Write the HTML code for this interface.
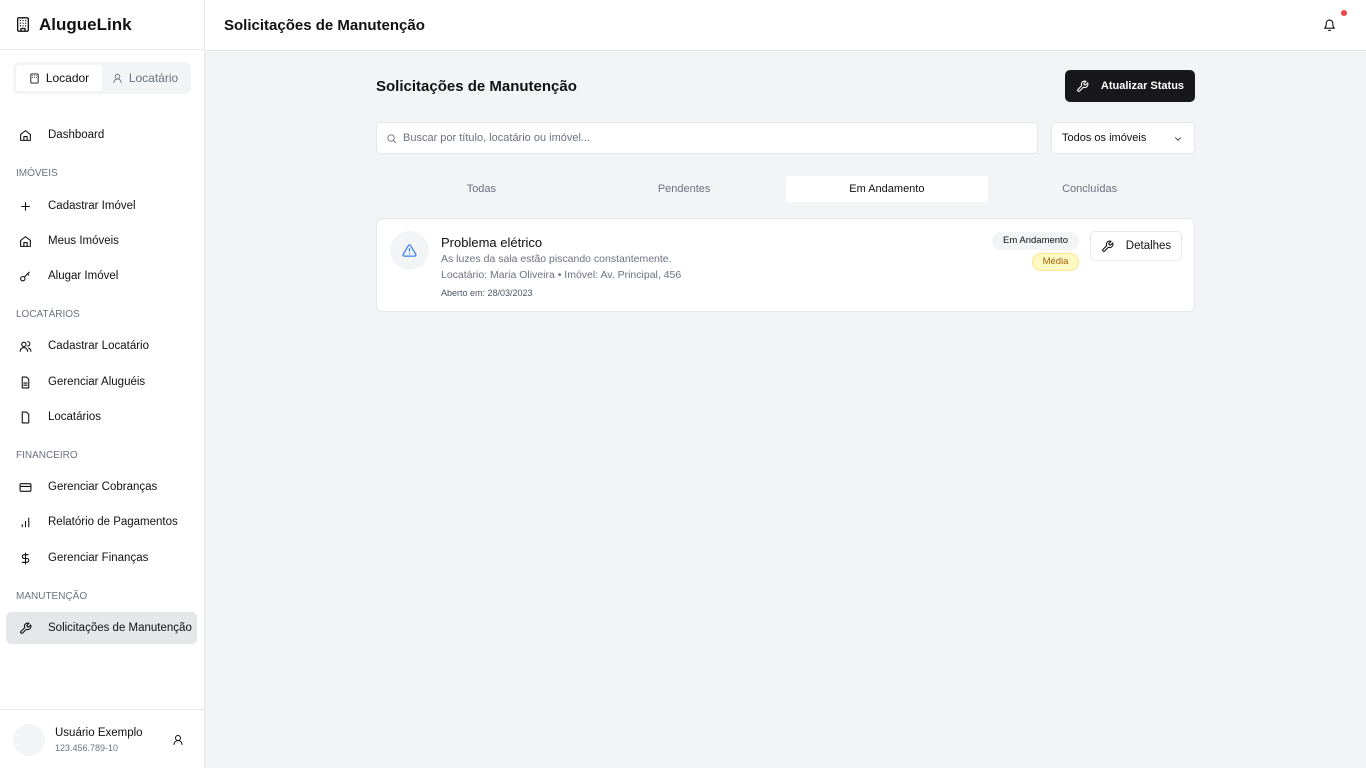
<!DOCTYPE html>
<html><head><meta charset="utf-8"><style>
*{box-sizing:border-box;margin:0;padding:0}
body{width:1366px;height:768px;font-family:"Liberation Sans",sans-serif;background:#f3f4f6;color:#111;position:relative;overflow:hidden}
.side{position:absolute;left:0;top:0;width:205px;height:768px;background:#fff;border-right:1px solid #e5e7eb}
.logo{height:50px;border-bottom:1px solid #e5e7eb;display:flex;align-items:center;padding-left:15px;font-weight:bold;font-size:17px;gap:8px}
.toggle{position:absolute;left:13px;top:62px;width:178px;height:32px;background:#f3f4f6;border-radius:6px;padding:3px;display:flex;font-size:12px}
.toggle div{flex:1;display:flex;align-items:center;justify-content:center;gap:6px;border-radius:4px;color:#6b7280}
.toggle .on{background:#fff;color:#111}
.item{position:absolute;left:6px;width:191px;height:32px;display:flex;align-items:center;padding-left:13px;font-size:11.5px;gap:16px;border-radius:5px}
.item svg{width:13px;height:13px}
.sec{position:absolute;left:16px;font-size:10px;color:#6b7280}
.top{position:absolute;left:205px;top:0;right:0;height:51px;background:#fff;border-bottom:1px solid #e5e7eb;font-size:15px;font-weight:bold;padding:17px 19px}
svg{fill:none;stroke:currentColor;stroke-width:2;stroke-linecap:round;stroke-linejoin:round}
</style></head><body>
<div class="side">
<div class="logo"><svg width="16" height="17" viewBox="0 0 24 24"><rect x="4" y="2" width="16" height="20" rx="2"/><path d="M9 22v-4h6v4M8 6h.01M12 6h.01M16 6h.01M8 10h.01M12 10h.01M16 10h.01M8 14h.01M12 14h.01M16 14h.01"/></svg>AlugueLink</div>
<div class="toggle"><div class="on"><svg width="11" height="11" viewBox="0 0 24 24"><rect x="4" y="2" width="16" height="20" rx="2"/><path d="M8 6h.01M12 6h.01M16 6h.01M8 10h.01M12 10h.01M16 10h.01"/></svg>Locador</div><div><svg width="11" height="11" viewBox="0 0 24 24"><circle cx="12" cy="8" r="5"/><path d="M20 21a8 8 0 0 0-16 0"/></svg>Locatário</div></div>
<div class="item" style="top:119px"><svg viewBox="0 0 24 24"><path d="M3 10l9-7 9 7v11H3z"/><path d="M9 21v-7h6v7"/></svg>Dashboard</div>
<div class="sec" style="top:168px">IMÓVEIS</div>
<div class="item" style="top:190px"><svg viewBox="0 0 24 24"><path d="M5 12h14M12 5v14"/></svg>Cadastrar Imóvel</div>
<div class="item" style="top:225px"><svg viewBox="0 0 24 24"><path d="M3 10l9-7 9 7v11H3z"/><path d="M9 21v-7h6v7"/></svg>Meus Imóveis</div>
<div class="item" style="top:260px"><svg viewBox="0 0 24 24"><circle cx="7" cy="16" r="4"/><path d="M10 13l9-9M16 7l2 2"/></svg>Alugar Imóvel</div>
<div class="sec" style="top:309px">LOCATÁRIOS</div>
<div class="item" style="top:330px"><svg viewBox="0 0 24 24"><circle cx="9" cy="8" r="4"/><path d="M2 21a7 7 0 0 1 14 0M16 3a4 4 0 0 1 0 8M22 21a7 7 0 0 0-4-6"/></svg>Cadastrar Locatário</div>
<div class="item" style="top:366px"><svg viewBox="0 0 24 24"><path d="M14 2H6v20h12V6zM9 13h6M9 17h6"/></svg>Gerenciar Aluguéis</div>
<div class="item" style="top:401px"><svg viewBox="0 0 24 24"><path d="M14 2H6v20h12V6z"/></svg>Locatários</div>
<div class="sec" style="top:450px">FINANCEIRO</div>
<div class="item" style="top:471px"><svg viewBox="0 0 24 24"><rect x="2" y="5" width="20" height="14" rx="2"/><path d="M2 10h20"/></svg>Gerenciar Cobranças</div>
<div class="item" style="top:506px"><svg viewBox="0 0 24 24"><path d="M6 20v-4M12 20V10M18 20V4"/></svg>Relatório de Pagamentos</div>
<div class="item" style="top:542px"><svg viewBox="0 0 24 24"><path d="M12 2v20M17 5H9.5a3.5 3.5 0 0 0 0 7h5a3.5 3.5 0 0 1 0 7H6"/></svg>Gerenciar Finanças</div>
<div class="sec" style="top:591px">MANUTENÇÃO</div>
<div class="item" style="top:612px;background:#e5e7eb"><svg viewBox="0 0 24 24"><path d="M14.7 6.3a1 1 0 0 0 0 1.4l1.6 1.6a1 1 0 0 0 1.4 0l3.8-3.8a6 6 0 0 1-7.9 7.9l-6.9 6.9a2.1 2.1 0 0 1-3-3l6.9-6.9a6 6 0 0 1 7.9-7.9z"/></svg>Solicitações de Manutenção</div>
<div style="position:absolute;left:0;right:0;top:709px;border-top:1px solid #e5e7eb;height:59px">
<div style="position:absolute;left:13px;top:14px;width:32px;height:32px;border-radius:50%;background:#f3f4f6"></div>
<div style="position:absolute;left:55px;top:17px;font-size:11.5px">Usuário Exemplo</div>
<div style="position:absolute;left:55px;top:33px;font-size:9px;color:#6b7280">123.456.789-10</div>
<svg style="position:absolute;left:172px;top:24px" width="12" height="12" viewBox="0 0 24 24"><circle cx="12" cy="8" r="5"/><path d="M20 21a8 8 0 0 0-16 0"/></svg>
</div></div>
<div class="top">Solicitações de Manutenção
<svg style="position:absolute;right:30px;top:19px" width="13" height="13" viewBox="0 0 24 24"><path d="M6 8a6 6 0 0 1 12 0c0 7 3 9 3 9H3s3-2 3-9M10 21h4"/></svg>
<div style="position:absolute;right:19px;top:10px;width:6px;height:6px;border-radius:50%;background:#ef4444"></div></div>
<div style="position:absolute;left:376px;top:78px;font-size:15px;font-weight:bold">Solicitações de Manutenção</div>
<div style="position:absolute;left:1065px;top:70px;width:130px;height:32px;background:#18181b;border-radius:5px;color:#fff;font-size:11px;font-weight:bold;display:flex;align-items:center;justify-content:center;gap:12px"><svg width="13" height="13" viewBox="0 0 24 24"><path d="M14.7 6.3a1 1 0 0 0 0 1.4l1.6 1.6a1 1 0 0 0 1.4 0l3.8-3.8a6 6 0 0 1-7.9 7.9l-6.9 6.9a2.1 2.1 0 0 1-3-3l6.9-6.9a6 6 0 0 1 7.9-7.9z"/></svg>Atualizar Status</div>
<div style="position:absolute;left:376px;top:122px;width:662px;height:32px;background:#fff;border:1px solid #e5e7eb;border-radius:5px;font-size:11px;color:#6b7280;padding:9px 0 0 26px">Buscar por título, locatário ou imóvel...
<svg style="position:absolute;left:9px;top:10px" width="11" height="11" viewBox="0 0 24 24"><circle cx="11" cy="11" r="7"/><path d="M21 21l-5-5"/></svg></div>
<div style="position:absolute;left:1051px;top:122px;width:144px;height:32px;background:#fff;border:1px solid #e5e7eb;border-radius:5px;font-size:11px;padding:9px 10px">Todos os imóveis<svg style="position:absolute;right:11px;top:11px" width="10" height="10" viewBox="0 0 24 24"><path d="M6 9l6 6 6-6"/></svg></div>
<div style="position:absolute;left:376px;top:172px;width:819px;height:34px;background:#f3f4f6;display:flex;padding:4px;font-size:11px;color:#6b7280">
<div style="flex:1;display:flex;align-items:center;justify-content:center">Todas</div>
<div style="flex:1;display:flex;align-items:center;justify-content:center">Pendentes</div>
<div style="flex:1;display:flex;align-items:center;justify-content:center;background:#fff;color:#111;border-radius:3px">Em Andamento</div>
<div style="flex:1;display:flex;align-items:center;justify-content:center">Concluídas</div></div>
<div style="position:absolute;left:376px;top:218px;width:819px;height:94px;background:#fff;border:1px solid #e5e7eb;border-radius:7px">
<div style="position:absolute;left:13px;top:12px;width:39px;height:39px;border-radius:50%;background:#f3f4f6;display:flex;align-items:center;justify-content:center;color:#3b82f6"><svg width="15" height="15" viewBox="0 0 24 24"><path d="M10.3 3.9L2 18a2 2 0 0 0 1.7 3h16.6a2 2 0 0 0 1.7-3L13.7 3.9a2 2 0 0 0-3.4 0zM12 9v4M12 17h.01"/></svg></div>
<div style="position:absolute;left:64px;top:16px;font-size:13px">Problema elétrico</div>
<div style="position:absolute;left:64px;top:34px;font-size:10.5px;color:#6b7280">As luzes da sala estão piscando constantemente.</div>
<div style="position:absolute;left:64px;top:50px;font-size:10.5px;color:#6b7280">Locatário: Maria Oliveira • Imóvel: Av. Principal, 456</div>
<div style="position:absolute;left:64px;top:69px;font-size:9px;color:#4b5563">Aberto em: 28/03/2023</div>
<div style="position:absolute;left:615px;top:13px;width:87px;height:18px;border-radius:9px;background:#f3f4f6;font-size:9.5px;text-align:center;line-height:18px">Em Andamento</div>
<div style="position:absolute;left:655px;top:34px;width:47px;height:18px;border-radius:9px;background:#fef9c3;border:1px solid #fde68a;color:#a16207;font-size:9.5px;text-align:center;line-height:16px">Média</div>
<div style="position:absolute;left:713px;top:12px;width:92px;height:30px;border:1px solid #e5e7eb;border-radius:5px;font-size:11.5px;display:flex;align-items:center;justify-content:center;gap:12px"><svg width="13" height="13" viewBox="0 0 24 24"><path d="M14.7 6.3a1 1 0 0 0 0 1.4l1.6 1.6a1 1 0 0 0 1.4 0l3.8-3.8a6 6 0 0 1-7.9 7.9l-6.9 6.9a2.1 2.1 0 0 1-3-3l6.9-6.9a6 6 0 0 1 7.9-7.9z"/></svg>Detalhes</div>
</div>
</body></html>
